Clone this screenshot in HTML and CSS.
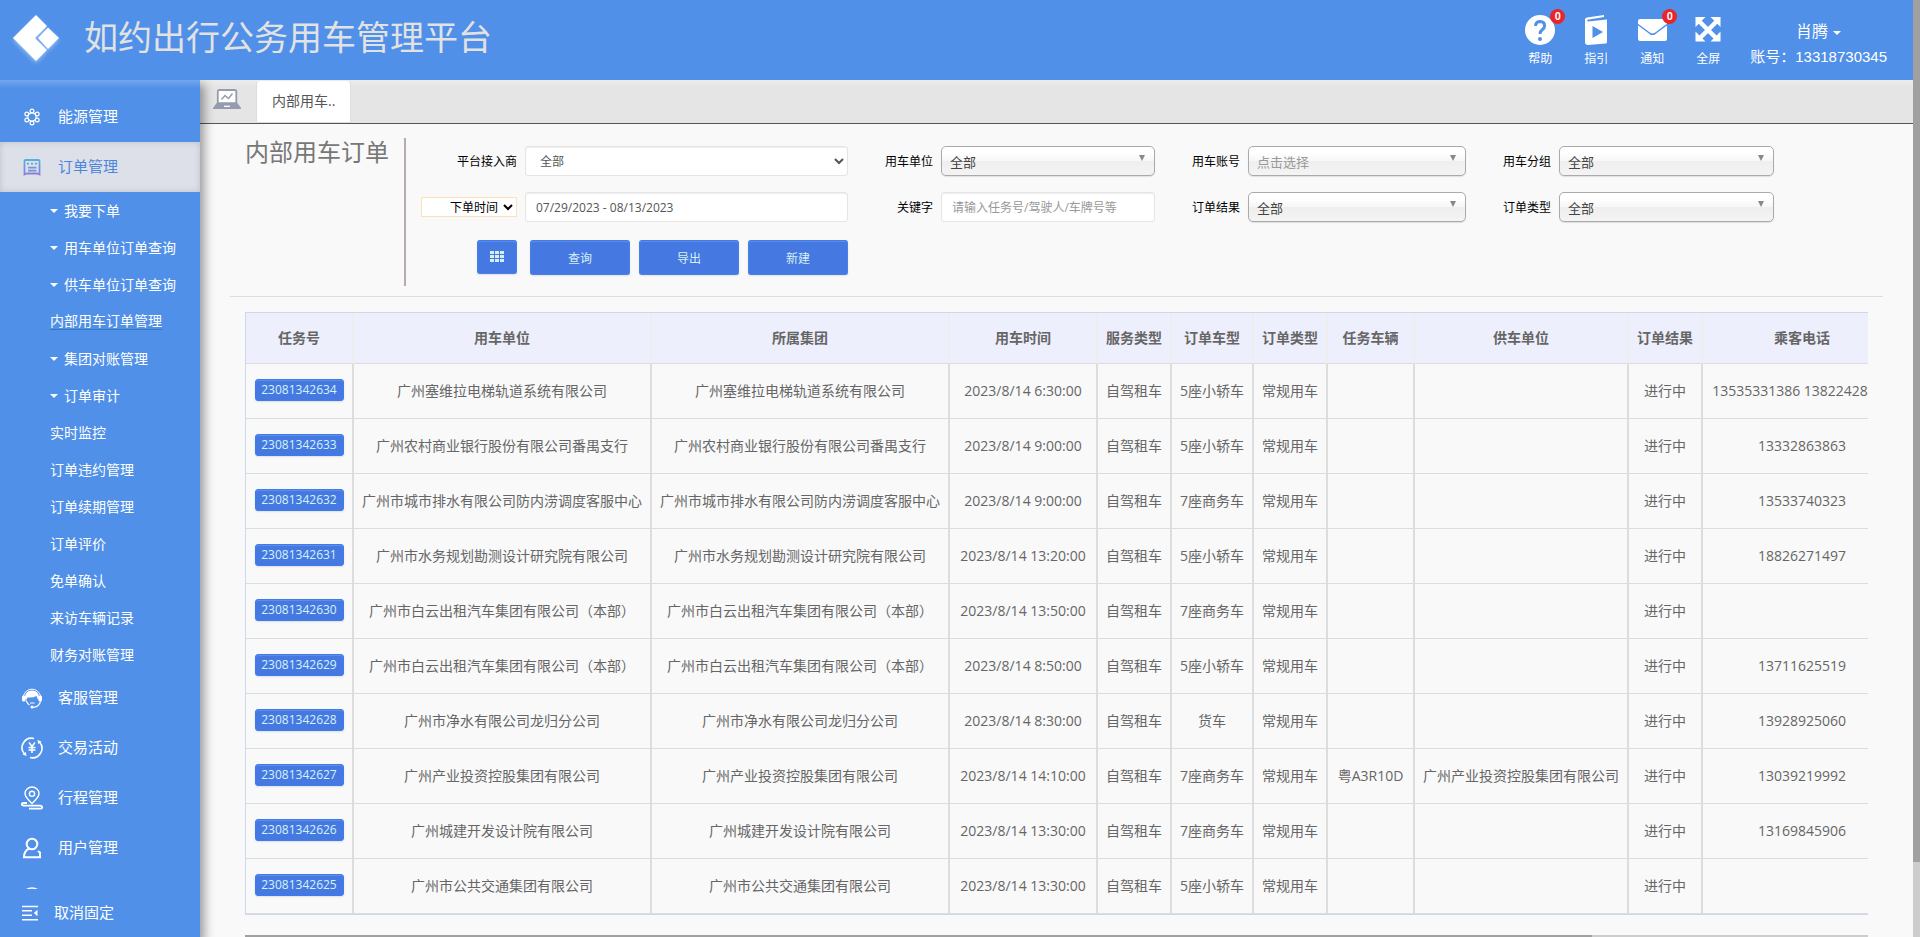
FILE: index.html
```html
<!DOCTYPE html>
<html lang="zh-CN">
<head>
<meta charset="utf-8">
<title>如约出行公务用车管理平台</title>
<link rel="stylesheet" href="styles.css">
</head>
<body>
<div class="page">
<div class="app">
  <header class="topbar">
    <svg class="logo" width="50" height="54" viewBox="0 0 50 54"><path fill="#fff" d="M25 3 36 14 24 26 36 38 25 49 2 26z"/><path fill="#fff" d="M37 15.500 48 26 37 37 27 26z"/></svg>
    <h1 class="brand">如约出行公务用车管理平台</h1>
    <nav class="tools">
      <a class="tool" href="#">
        <svg width="30" height="30" viewBox="0 0 30 30"><circle cx="15" cy="15" r="15" fill="#fff"/><path d="M10.500 11q.3-4.500 4.700-4.500 4.400.2 4.400 4.300 0 2.200-2.400 3.900-2.200 1.500-2.200 4.300" fill="none" stroke="#5090e8" stroke-width="3"/><circle cx="15" cy="24" r="2" fill="#5090e8"/></svg>
        <span>帮助</span><b class="badge">0</b>
      </a>
      <a class="tool" href="#">
        <svg width="30" height="30" viewBox="0 0 30 30"><path fill="#fff" d="M4 4.500Q4 3 6 2.500L23 0v2L6.500 4.800q-1 1.200.5 1.800L26 4.500V27q0 1.500-1.500 1.600L7 30q-3 0-3-3z"/><path fill="#5090e8" d="M11.500 11v12L22 17z"/></svg>
        <span>指引</span>
      </a>
      <a class="tool" href="#">
        <svg width="30" height="30" viewBox="0 0 30 30"><rect x="1" y="4" width="29" height="22" rx="2" fill="#fff"/><path d="M1 9.500 13 18.500q2.500 1.500 5 0L30 9.500" fill="none" stroke="#5090e8" stroke-width="1.500"/></svg>
        <span>通知</span><b class="badge">0</b>
      </a>
      <a class="tool" href="#">
        <svg width="30" height="30" viewBox="0 0 30 30"><path d="M6 6 24 24M24 6 6 24" stroke="#fff" stroke-width="4.500"/><path fill="#fff" d="M2.500 2H12.500L2.500 12zM27.500 2H17.500L27.500 12zM2.500 26.500H12.500L2.500 16.500zM27.500 26.500H17.500L27.500 16.500z"/></svg>
        <span>全屏</span>
      </a>
      <button class="account" type="button"><span class="user">肖腾<i class="caret"></i></span><span>账号：13318730345</span></button>
    </nav>
  </header>
  <div class="body">
    <aside class="sidebar">
      <ul class="menu">
        <li><a class="item" href="#"><svg width="22" height="22" viewBox="0 0 22 22" fill="none" stroke="#fff" stroke-width="1.200"><circle cx="11" cy="11" r="4.200"/><circle cx="11" cy="5" r="1.900"/><circle cx="11" cy="17" r="1.900"/><circle cx="5.800" cy="8" r="1.900"/><circle cx="16.200" cy="8" r="1.900"/><circle cx="5.800" cy="14" r="1.900"/><circle cx="16.200" cy="14" r="1.900"/></svg><span>能源管理</span></a></li>
        <li><a class="item active" href="#"><svg width="22" height="22" viewBox="0 0 22 22"><defs><linearGradient id="g" gradientUnits="userSpaceOnUse" x1="0" y1="3" x2="0" y2="19"><stop offset="0" stop-color="#4fb4e4"/><stop offset="1" stop-color="#8a7fd6"/></linearGradient></defs><path fill="none" stroke="url(#g)" stroke-width="1.800" d="M4.500 4H17.500Q18.500 4 18.500 5V18.500L16 17.500H6L3.500 18.500V5Q3.500 4 4.500 4z"/><path stroke="url(#g)" stroke-width="1.600" d="M6 7.600h2M10 7.600h2M14 7.600h2M7 11.600h8.500M7 14.600h8.500"/></svg><span>订单管理</span></a>
          <ul class="submenu">
            <li><a href="#"><i class="caret"></i>我要下单</a></li>
            <li><a href="#"><i class="caret"></i>用车单位订单查询</a></li>
            <li><a href="#"><i class="caret"></i>供车单位订单查询</a></li>
            <li><a href="#"><span class="current">内部用车订单管理</span></a></li>
            <li><a href="#"><i class="caret"></i>集团对账管理</a></li>
            <li><a href="#"><i class="caret"></i>订单审计</a></li>
            <li><a href="#">实时监控</a></li>
            <li><a href="#">订单违约管理</a></li>
            <li><a href="#">订单续期管理</a></li>
            <li><a href="#">订单评价</a></li>
            <li><a href="#">免单确认</a></li>
            <li><a href="#">来访车辆记录</a></li>
            <li><a href="#">财务对账管理</a></li>
          </ul>
        </li>
        <li><a class="item" href="#"><svg width="22" height="22" viewBox="0 0 22 22"><path d="M2.500 9a8.700 8.700 0 0 1 17 0" fill="none" stroke="#fff" stroke-width="1"/><path fill="#fff" d="M4 11Q4 3.500 11 3.500T18 11L17.500 13Q16 11.500 15.500 9 12 11 6.500 10.500L5 13.500z"/><rect x="1" y="8.500" width="3.500" height="6" rx="1.500" fill="#fff"/><rect x="17.500" y="8.500" width="3.500" height="6" rx="1.500" fill="#fff"/><path d="M19.500 14.500Q18 20 12 20.300M5 13.500Q6.500 17 8.500 18M9 16h4.500" fill="none" stroke="#fff" stroke-width="1.200"/><circle cx="11" cy="20" r="1.500" fill="#fff"/></svg><span>客服管理</span></a></li>
        <li><a class="item" href="#"><svg width="22" height="22" viewBox="0 0 22 22" fill="none" stroke="#fff" stroke-width="1.600"><path d="M13 1.500A9.500 9.500 0 0 0 3.500 17M9 20.500A9.500 9.500 0 0 0 18.500 5"/><path d="M1.500 17.500 5.500 19 4.800 15zM20.500 4.500 16.500 3 17.200 7z" fill="#fff" stroke="none"/><path d="M8 5.500 11 9.500 14 5.500M11 9.500V16M7.500 10.500h7M7.500 13h7"/></svg><span>交易活动</span></a></li>
        <li><a class="item" href="#"><svg width="22" height="24" viewBox="0 0 22 24" fill="none" stroke="#fff" stroke-width="1.400"><path d="M11 17.500Q4 11 4 7.500a7 6.500 0 0 1 14 0Q18 11 11 17.500z"/><circle cx="11" cy="7.800" r="2.600"/><path d="M6 17H2.500Q.8 17 .8 18.300T2.500 19.700H19Q21.200 19.700 21.200 21.200T19 22.700H8" stroke-width="1.800"/></svg><span>行程管理</span></a></li>
        <li><a class="item" href="#"><svg width="22" height="22" viewBox="0 0 22 22" fill="none" stroke="#fff" stroke-width="2"><circle cx="11" cy="7" r="5.300"/><path d="M8 11.500Q3 14 3 20.200H19V15.500L17.500 14.500" stroke-linecap="round"/></svg><span>用户管理</span></a></li>
        <li><a class="item" href="#" aria-label="更多"><svg width="22" height="22" viewBox="0 0 22 22"><circle cx="11" cy="11" r="10" fill="none" stroke="#fff" stroke-width="1.500"/></svg></a></li>
      </ul>
      <button class="pin" type="button"><svg width="18" height="18" viewBox="0 0 18 18"><path stroke="#fff" stroke-width="1.400" d="M1 2.500h16M1 6.800h10M1 11.200h10M1 15.700h16"/><path fill="#fff" d="M16.500 5.800v6.400L12.800 9z"/></svg><span>取消固定</span></button>
    </aside>
    <main class="main">
      <div class="tabs">
        <a class="home" href="#" aria-label="首页"><svg width="28" height="22" viewBox="0 0 28 22"><rect x="4.800" y="2" width="18.500" height="13.500" rx="1.500" fill="#fff" stroke="#959cb0" stroke-width="1.800"/><path d="M8.500 11.500 12 7.500 15.500 10.500 19.500 5.500" fill="none" stroke="#959cb0" stroke-width="1.500"/><path fill="#959cb0" d="M4 14.500H24L28 20v1H0V20z"/><path d="M11 18.300h6" stroke="#fff" stroke-width="1.300"/></svg></a>
        <a class="tab" href="#">内部用车..</a>
      </div>
      <section class="filters">
        <h2 class="title">内部用车订单</h2>
        <form class="form">
          <label for="f1">平台接入商</label>
          <select id="f1" class="field native"><option>全部</option></select>
          <label for="f2">用车单位</label>
          <div class="chosen"><select id="f2"><option>全部</option></select></div>
          <label for="f3">用车账号</label>
          <div class="chosen empty"><select id="f3"><option>点击选择</option></select></div>
          <label for="f4">用车分组</label>
          <div class="chosen"><select id="f4"><option>全部</option></select></div>
          <select class="timetype" aria-label="时间类型"><option>下单时间</option></select>
          <input class="field" type="text" aria-label="时间范围" value="07/29/2023 - 08/13/2023">
          <label for="f5">关键字</label>
          <input id="f5" class="field" type="text" placeholder="请输入任务号/驾驶人/车牌号等">
          <label for="f6">订单结果</label>
          <div class="chosen"><select id="f6"><option>全部</option></select></div>
          <label for="f7">订单类型</label>
          <div class="chosen"><select id="f7"><option>全部</option></select></div>
          <button class="btn square" type="button" aria-label="列设置"><svg width="15" height="14" viewBox="0 0 15 14"><path fill="#d4f0f4" d="M0 1h4v3H0zM5 1h4v3H5zM10 1h4v3h-4zM0 5h4v3H0zM5 5h4v3H5zM10 5h4v3h-4zM0 9h4v3H0zM5 9h4v3H5zM10 9h4v3h-4z"/></svg></button>
          <div class="actions"><button class="btn" type="button">查询</button><button class="btn" type="button">导出</button><button class="btn" type="button">新建</button></div>
        </form>
      </section>
      <section class="results">
        <div class="tablewrap">
        <table class="orders">
          <colgroup><col class="c-id"><col class="c-org"><col class="c-org"><col class="c-time"><col class="c-s"><col class="c-m"><col class="c-s"><col class="c-car"><col class="c-sup"><col class="c-s"><col class="c-tel"></colgroup>
          <thead><tr><th>任务号</th><th>用车单位</th><th>所属集团</th><th>用车时间</th><th>服务类型</th><th>订单车型</th><th>订单类型</th><th>任务车辆</th><th>供车单位</th><th>订单结果</th><th>乘客电话</th></tr></thead>
          <tbody>
          <tr><td><a class="id" href="#">23081342634</a></td><td>广州塞维拉电梯轨道系统有限公司</td><td>广州塞维拉电梯轨道系统有限公司</td><td>2023/8/14 6:30:00</td><td>自驾租车</td><td>5座小轿车</td><td>常规用车</td><td></td><td></td><td>进行中</td><td>13535331386 13822428000</td></tr>
          <tr><td><a class="id" href="#">23081342633</a></td><td>广州农村商业银行股份有限公司番禺支行</td><td>广州农村商业银行股份有限公司番禺支行</td><td>2023/8/14 9:00:00</td><td>自驾租车</td><td>5座小轿车</td><td>常规用车</td><td></td><td></td><td>进行中</td><td>13332863863</td></tr>
          <tr><td><a class="id" href="#">23081342632</a></td><td>广州市城市排水有限公司防内涝调度客服中心</td><td>广州市城市排水有限公司防内涝调度客服中心</td><td>2023/8/14 9:00:00</td><td>自驾租车</td><td>7座商务车</td><td>常规用车</td><td></td><td></td><td>进行中</td><td>13533740323</td></tr>
          <tr><td><a class="id" href="#">23081342631</a></td><td>广州市水务规划勘测设计研究院有限公司</td><td>广州市水务规划勘测设计研究院有限公司</td><td>2023/8/14 13:20:00</td><td>自驾租车</td><td>5座小轿车</td><td>常规用车</td><td></td><td></td><td>进行中</td><td>18826271497</td></tr>
          <tr><td><a class="id" href="#">23081342630</a></td><td>广州市白云出租汽车集团有限公司（本部）</td><td>广州市白云出租汽车集团有限公司（本部）</td><td>2023/8/14 13:50:00</td><td>自驾租车</td><td>7座商务车</td><td>常规用车</td><td></td><td></td><td>进行中</td><td></td></tr>
          <tr><td><a class="id" href="#">23081342629</a></td><td>广州市白云出租汽车集团有限公司（本部）</td><td>广州市白云出租汽车集团有限公司（本部）</td><td>2023/8/14 8:50:00</td><td>自驾租车</td><td>5座小轿车</td><td>常规用车</td><td></td><td></td><td>进行中</td><td>13711625519</td></tr>
          <tr><td><a class="id" href="#">23081342628</a></td><td>广州市净水有限公司龙归分公司</td><td>广州市净水有限公司龙归分公司</td><td>2023/8/14 8:30:00</td><td>自驾租车</td><td>货车</td><td>常规用车</td><td></td><td></td><td>进行中</td><td>13928925060</td></tr>
          <tr><td><a class="id" href="#">23081342627</a></td><td>广州产业投资控股集团有限公司</td><td>广州产业投资控股集团有限公司</td><td>2023/8/14 14:10:00</td><td>自驾租车</td><td>7座商务车</td><td>常规用车</td><td>粤A3R10D</td><td>广州产业投资控股集团有限公司</td><td>进行中</td><td>13039219992</td></tr>
          <tr><td><a class="id" href="#">23081342626</a></td><td>广州城建开发设计院有限公司</td><td>广州城建开发设计院有限公司</td><td>2023/8/14 13:30:00</td><td>自驾租车</td><td>7座商务车</td><td>常规用车</td><td></td><td></td><td>进行中</td><td>13169845906</td></tr>
          <tr><td><a class="id" href="#">23081342625</a></td><td>广州市公共交通集团有限公司</td><td>广州市公共交通集团有限公司</td><td>2023/8/14 13:30:00</td><td>自驾租车</td><td>5座小轿车</td><td>常规用车</td><td></td><td></td><td>进行中</td><td></td></tr>
          </tbody>
        </table>
        </div>
        <div class="hscroll"><div class="hthumb"></div></div>
      </section>
    </main>
  </div>
</div>
<div class="vscroll"><div class="vthumb"></div></div>
</div>
</body>
</html>
```

FILE: styles.css
```css
* { box-sizing: border-box; }
body { margin: 0; font: 14px "Open Sans", "Noto Sans CJK SC", sans-serif; color: #666; }
a { color: inherit; text-decoration: none; }
ul { list-style: none; margin: 0; padding: 0; }
button, input, select { font-family: inherit; }
button { cursor: pointer; }

.page { display: flex; height: 100vh; overflow: hidden; background: #f9f9f9; }
.app { flex: 1; min-width: 0; display: flex; flex-direction: column; }
.vscroll { width: 7px; background: #cdcdcd; }
.vthumb { height: 92%; background: #a0a0a0; }

.topbar { height: 80px; flex: none; display: flex; align-items: center; padding: 0 26px 0 11px; background: #5090e8; color: #fff; font-family: "Liberation Sans", "Noto Sans CJK SC", sans-serif; }
.logo { flex: none; margin-bottom: 2px; filter: drop-shadow(0 2px 2px rgba(255, 255, 255, .4)); }
.brand { flex: 1; margin: 0 0 4px 23px; font-size: 34px; font-weight: 400; line-height: 48px; color: #e2e2e2; }
.tools { display: flex; align-items: flex-start; padding-top: 4px; }
.tool { position: relative; width: 56px; display: flex; flex-direction: column; align-items: center; gap: 5px; font-size: 12px; line-height: 18px; }
.badge { position: absolute; right: 3px; top: -6px; width: 15px; height: 15px; border-radius: 50%; background: #e92528; font-size: 11px; line-height: 14px; text-align: center; }
.account { display: flex; flex-direction: column; align-items: center; margin-left: 14px; padding: 4px 0 0; border: 0; background: none; color: #fff; font-size: 15px; line-height: 25px; white-space: nowrap; }
.user { font-size: 16px; }
.caret { display: inline-block; border: 4px solid transparent; border-top-color: currentColor; border-bottom: 0; vertical-align: middle; }
.user .caret { margin-left: 5px; }

.body { flex: 1; min-height: 0; display: flex; }
.sidebar { position: relative; z-index: 1; width: 200px; flex: none; display: flex; flex-direction: column; background: linear-gradient(#73a7ed, #5090e8 8px); color: #fff; box-shadow: 2px 6px 10px 2px rgba(0, 0, 0, .4); clip-path: inset(0 -20px 0 0); }
.menu { flex: 1; min-height: 0; overflow: hidden; padding-top: 12px; }
.item { display: flex; align-items: center; gap: 15px; height: 50px; padding-left: 21px; font-size: 15px; }
.item svg { flex: none; }
.item span, .pin span { padding-bottom: 4px; }
.item.active { background: #dde0e9; color: #4c86dc; box-shadow: inset 0 0 6px rgba(0, 0, 0, .15); }
.submenu a { display: flex; align-items: center; height: 37px; padding: 0 0 2px 50px; }
.submenu .caret { margin: 3px 6px 0 0; }
.current { line-height: 17px; border-bottom: 1px solid #337ab7; }
.pin { flex: none; display: flex; align-items: center; gap: 15px; height: 48px; padding: 0 0 0 21px; border: 0; background: none; color: #fff; font-size: 15px; }

.main { flex: 1; min-width: 0; display: flex; flex-direction: column; }
.tabs { flex: none; display: flex; height: 44px; padding: 1px 0 0 13px; background: linear-gradient(#ececec, #e5e5e5 8px); border-bottom: 1px solid #555; }
.home { width: 43px; padding-top: 7px; }
.tab { height: 42px; padding: 0 15px; border: 1px solid #ddd; border-top: 0; border-radius: 4px 4px 0 0; background: #fff; color: #555; line-height: 39px; }

.filters { display: flex; margin: 14px 30px 0; padding: 0 109px 10px 15px; border-bottom: 1px solid #ddd; }
.title { flex: none; width: 161px; height: 148px; margin: 0; border-right: 2px solid #baabab; font-size: 24px; font-weight: 400; line-height: 28px; color: #777; }
.form { flex: 1; display: grid; grid-template-columns: 96px 323fr 77px 214fr 77px 218fr 77px 215fr; grid-auto-rows: 30px; gap: 16px 8px; align-items: center; padding: 8px 0 0 15px; color: #000; font-size: 12px; }
.form label { text-align: right; }
.field { width: 100%; height: 30px; padding: 0 10px; border: 1px solid #e5e5e5; border-radius: 3px; background: #fff; box-shadow: inset 0 1px 1px rgba(0, 0, 0, .075); color: #555; font-size: 12px; }
.field::placeholder { color: #999; }
.native { padding: 0 10px; }
.timetype { height: 20px; padding: 0 2px 0 0; border: 1px solid #ffe0b8; background: #fff; color: #000; font-size: 12px; text-align: right; text-align-last: right; }
.chosen { position: relative; }
.chosen select { display: block; appearance: none; width: 100%; height: 30px; padding: 1px 24px 0 8px; border: 1px solid #aaa; border-radius: 5px; background: linear-gradient(#fff 20%, #f6f6f6 50%, #eee 52%, #f4f4f4 100%); box-shadow: 0 1px 1px rgba(0, 0, 0, .1); color: #444; font-size: 13px; }
.chosen.empty select { color: #999; }
.chosen::after { content: ""; position: absolute; right: 10px; top: 9px; border: 3px solid transparent; border-top: 6px solid #888; border-bottom: 0; pointer-events: none; }
.btn { height: 35px; border: 1px solid #4a80ea; border-top-color: #3b7cf0; border-radius: 3px; background: #4678e2; box-shadow: inset 0 1px 0 rgba(255, 255, 255, .15), 0 1px 2px rgba(0, 0, 0, .1); color: #d4f0f4; font-size: 12px; }
.square { justify-self: end; width: 40px; height: 34px; display: grid; place-items: center; align-self: start; margin-top: 2px; }
.actions { display: grid; grid-template-columns: repeat(3, 1fr); gap: 9px; align-self: start; margin: 2px 0 0 5px; }

.results { padding: 15px 45px 0; }
.tablewrap { overflow: hidden; }
.orders { width: 1658px; table-layout: fixed; border-collapse: separate; border-spacing: 0; border: 1px solid #cbd9ea; text-align: center; white-space: nowrap; }
.orders th { height: 51px; padding: 0 0 2px; border: 1px solid #eee; border-top: 0; border-bottom: 1px solid #ddd; background: #eeeffd; font-weight: 700; }
.orders td { height: 55px; padding: 0 0 2px; border: 1px solid #ddd; border-top: 0; }
.orders th:first-child, .orders td:first-child { border-left: 0; }
.c-id { width: 107px; }
.c-org { width: 298px; }
.c-time { width: 148px; }
.c-s { width: 74px; }
.c-m { width: 82px; }
.c-car { width: 87px; }
.c-sup { width: 214px; }
.id { display: inline-block; width: 89px; height: 22px; border: 1px solid #3b7cf0; border-radius: 3px; background: #4678e2; box-shadow: inset 0 1px 0 rgba(255, 255, 255, .15), 0 1px 2px rgba(0, 0, 0, .1); color: #d4f4f8; font-size: 12px; line-height: 20px; vertical-align: middle; }
.hscroll { height: 7px; margin-top: 20px; background: #cdcdcd; }
.hthumb { width: 83%; height: 7px; background: #a0a0a0; }
```
